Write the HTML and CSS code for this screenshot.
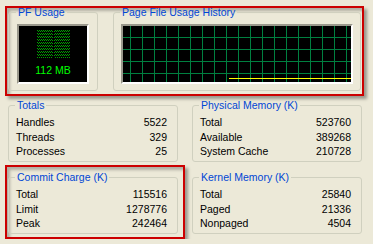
FILE: index.html
```html
<!DOCTYPE html>
<html lang="en">
<head>
    <meta charset="UTF-8">
    <meta name="viewport" content="width=device-width, initial-scale=1.0">
    <title>Task Manager - Performance</title>
    <link rel="stylesheet" href="styles.css">
</head>
<body>

    <div class="perf">

        <!-- graphs, marked in red -->
        <div class="mark mark-top">
            <fieldset class="group group-pf">
                <legend>PF Usage</legend>
                <div class="screen pf-screen">
                    <svg class="pf-bar" width="33" height="28" viewBox="0 0 33 28">
                        <defs>
                            <pattern id="dots" width="2" height="3" patternUnits="userSpaceOnUse">
                                <rect x="0" y="0" width="1" height="1" fill="#00a000"/>
                                <rect x="1" y="1" width="1" height="1" fill="#00a000"/>
                            </pattern>
                        </defs>
                        <rect x="0" y="0" width="16" height="28" fill="url(#dots)"/>
                        <rect x="17" y="0" width="16" height="28" fill="url(#dots)"/>
                    </svg>
                    <div class="pf-value">112 MB</div>
                </div>
            </fieldset>
            <fieldset class="group group-history">
                <legend>Page File Usage History</legend>
                <div class="screen history-screen">
                    <svg class="history-line" width="228" height="56" viewBox="0 0 228 56">
                        <polyline points="106,52.5 228,52.5" fill="none" stroke="#ffff00" stroke-width="1"/>
                    </svg>
                </div>
            </fieldset>
        </div>

        <!-- counters -->
        <div class="stats">
            <fieldset class="group stat-group totals">
                <legend>Totals</legend>
                <div class="row"><span>Handles</span><span>5522</span></div>
                <div class="row"><span>Threads</span><span>329</span></div>
                <div class="row"><span>Processes</span><span>25</span></div>
            </fieldset>

            <fieldset class="group stat-group">
                <legend>Physical Memory (K)</legend>
                <div class="row"><span>Total</span><span>523760</span></div>
                <div class="row"><span>Available</span><span>389268</span></div>
                <div class="row"><span>System Cache</span><span>210728</span></div>
            </fieldset>

            <div class="mark mark-commit">
                <fieldset class="group stat-group">
                    <legend>Commit Charge (K)</legend>
                    <div class="row"><span>Total</span><span>115516</span></div>
                    <div class="row"><span>Limit</span><span>1278776</span></div>
                    <div class="row"><span>Peak</span><span>242464</span></div>
                </fieldset>
            </div>

            <fieldset class="group stat-group kernel">
                <legend>Kernel Memory (K)</legend>
                <div class="row"><span>Total</span><span>25840</span></div>
                <div class="row"><span>Paged</span><span>21336</span></div>
                <div class="row"><span>Nonpaged</span><span>4504</span></div>
            </fieldset>
        </div>

    </div>

</body>
</html>
```

FILE: styles.css
```css
/* reset */
* {
    margin: 0;
    padding: 0;
    box-sizing: border-box;
}

body {
    background: #ece9d8;
    font-family: 'Liberation Sans', Arial, sans-serif;
    font-size: 10.5px;
    color: #000;
    overflow: hidden;
}

.perf {
    width: 373px;
    padding: 6px 0 0 5px;
}

/* red highlight frames */
.mark {
    border: 2px solid #cc0000;
    box-shadow: 3px 3px 3px rgba(0, 0, 0, 0.35), inset 3px 3px 3px rgba(0, 0, 0, 0.25);
}

.mark-top {
    display: flex;
    gap: 15px;
    width: 359px;
    padding: 1px 1px 3px;
}

/* XP style group boxes */
.group {
    border: 1px solid #d0d0bf;
    border-radius: 3px;
    min-width: 0;
}

.group legend {
    color: #0046d5;
    line-height: 13px;
    padding: 0 2px;
    margin-left: -1px;
}

.group-pf {
    width: 90px;
    margin-top: -3px;
    padding: 5px 8px 6px;
}

.group-history {
    width: 248px;
    margin-top: -3px;
    padding: 5px 7px 6px;
}

/* black displays */
.screen {
    height: 60px;
    background: #000;
    border: 2px solid;
    border-color: #9a988c #fff #fff #9a988c;
}

.pf-screen {
    width: 72px;
    display: flex;
    flex-direction: column;
    align-items: center;
    padding-top: 4px;
}

.pf-bar {
    display: block;
}

.pf-value {
    margin-top: 6px;
    line-height: 12px;
    color: #00ff00;
}

.history-screen {
    width: 232px;
    background-color: #000;
    background-image:
        linear-gradient(to right, #008040 1px, transparent 1px),
        linear-gradient(to bottom, #008040 1px, transparent 1px);
    background-size: 12px 12px;
    background-position: 7px 11px;
}

.history-line {
    display: block;
}

/* counters */
.stats {
    display: grid;
    grid-template-columns: 180px 170px;
    column-gap: 7px;
    row-gap: 3px;
    margin-top: 3px;
}

.stat-group {
    width: 170px;
    height: 63px;
    padding: 3px 10px 0 7px;
}

.totals {
    margin-left: 3px;
}

.kernel {
    margin-top: 6px;
}

.mark-commit {
    width: 180px;
    padding: 4px 1px 3px;
}

.row {
    display: flex;
    justify-content: space-between;
    line-height: 14.5px;
}
```
